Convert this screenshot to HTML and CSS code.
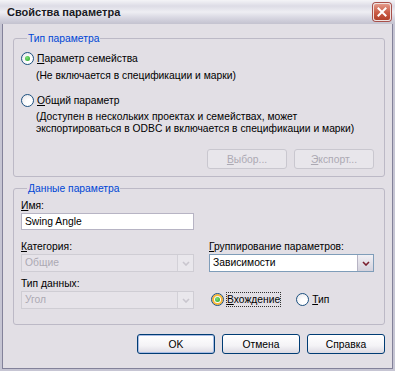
FILE: index.html
```html
<!DOCTYPE html>
<html lang="ru">
<head>
    <meta charset="UTF-8">
    <title>Свойства параметра</title>
    <link rel="stylesheet" href="styles.css">
</head>
<body>

<div class="window">
    <div class="titlebar">
        <span class="title">Свойства параметра</span>
        <span class="close">
            <svg width="18" height="18" viewBox="0 0 18 18">
                <path d="M5 5 L13 13 M13 5 L5 13" stroke="white" stroke-width="2.2" stroke-linecap="square"/>
            </svg>
        </span>
    </div>

    <div class="frame">
        <fieldset class="group group-type">
            <legend>Тип параметра</legend>
            <label class="radio-row first">
                <span class="radio checked"></span>
                <span><u>П</u>араметр семейства</span>
            </label>
            <p class="note">(Не включается в спецификации и марки)</p>
            <label class="radio-row second">
                <span class="radio"></span>
                <span><u>О</u>бщий параметр</span>
            </label>
            <p class="note wide">(Доступен в нескольких проектах и семействах, может<br>экспортироваться в ODBC и включается в спецификации и марки)</p>
            <div class="group-buttons">
                <button class="btn" disabled><u>В</u>ыбор...</button>
                <button class="btn" disabled><u>Э</u>кспорт...</button>
            </div>
        </fieldset>

        <fieldset class="group group-data">
            <legend>Данные параметра</legend>
            <div class="data-grid">
                <div class="cell">
                    <div class="field-label"><u>И</u>мя:</div>
                    <div class="textbox">Swing Angle</div>
                </div>
                <div class="cell"></div>

                <div class="cell">
                    <div class="field-label"><u>К</u>атегория:</div>
                    <div class="combo disabled">
                        <span class="combo-text">Общие</span>
                        <span class="combo-arrow">
                            <svg width="8" height="5" viewBox="0 0 8 5"><path d="M1 1 L4 4 L7 1" stroke="#c9c6ce" stroke-width="1.6" fill="none"/></svg>
                        </span>
                    </div>
                </div>
                <div class="cell">
                    <div class="field-label"><u>Г</u>руппирование параметров:</div>
                    <div class="combo">
                        <span class="combo-text">Зависимости</span>
                        <span class="combo-arrow">
                            <svg width="8" height="5" viewBox="0 0 8 5"><path d="M1 1 L4 4 L7 1" stroke="#7a2030" stroke-width="1.6" fill="none"/></svg>
                        </span>
                    </div>
                </div>

                <div class="cell">
                    <div class="field-label">Тип данных:</div>
                    <div class="combo disabled">
                        <span class="combo-text">Угол</span>
                        <span class="combo-arrow">
                            <svg width="8" height="5" viewBox="0 0 8 5"><path d="M1 1 L4 4 L7 1" stroke="#c9c6ce" stroke-width="1.6" fill="none"/></svg>
                        </span>
                    </div>
                </div>
                <div class="cell radio-pair">
                    <label class="radio-row">
                        <span class="radio checked hover"></span>
                        <span class="focus"><u>В</u>хождение</span>
                    </label>
                    <label class="radio-row">
                        <span class="radio"></span>
                        <span><u>Т</u>ип</span>
                    </label>
                </div>
            </div>
        </fieldset>

        <div class="actions">
            <button class="btn default">OK</button>
            <button class="btn">Отмена</button>
            <button class="btn">Справка</button>
        </div>
    </div>
</div>

</body>
</html>
```

FILE: styles.css
```css
body {
    margin: 0;
    padding: 0;
    font-family: "Liberation Sans", Arial, sans-serif;
    font-size: 10.3px;
    color: black;
    background-color: #e2dfe5;
}
u {
    text-decoration: underline;
    text-underline-offset: 1px;
}
.window {
    width: 395px;
    height: 371px;
    display: flex;
    flex-direction: column;
}
.titlebar {
    height: 24px;
    flex-shrink: 0;
    display: flex;
    align-items: center;
    justify-content: space-between;
    padding: 0 4px 0 7px;
    box-sizing: border-box;
    background: linear-gradient(to bottom, #f4f4f7 0%, #dddce6 25%, #eeeef3 50%, #d7d6e1 75%, #c3c2cf 100%);
}
.title {
    font-weight: bold;
    font-size: 11px;
    color: #1a1a24;
}
.close {
    width: 18px;
    height: 18px;
    border-radius: 3px;
    border: 1px solid #f0e3e0;
    box-sizing: border-box;
    display: flex;
    align-items: center;
    justify-content: center;
    background: linear-gradient(to bottom, #e39a8a, #c95a44 55%, #b2412b);
    box-shadow: 0 0 0 1px #a8504a;
}
.close svg {
    width: 16px;
    height: 16px;
}
.frame {
    flex: 1;
    border: 2px solid #c6c5d3;
    border-top: none;
    box-shadow: inset 1px 0 0 #83829a, inset -1px 0 0 #83829a, inset 0 -1px 0 #83829a;
    padding: 8px 8px 0 11px;
    display: flex;
    flex-direction: column;
}
.group {
    margin: 0;
    border: 1px solid #bcb9c6;
    border-radius: 3px;
    padding: 0 8px 0 7px;
    min-width: 0;
}
.group legend {
    color: #0046d5;
    padding: 0 1px;
    margin-left: 6px;
    line-height: 13px;
}
.radio-row {
    display: flex;
    align-items: center;
    gap: 3px;
    line-height: 13px;
}
.radio-row.first {
    margin-top: 7px;
}
.radio-row.second {
    margin-top: 12px;
}
.radio {
    width: 13px;
    height: 13px;
    box-sizing: border-box;
    border-radius: 50%;
    border: 1px solid #1c5180;
    background: radial-gradient(circle at 65% 70%, #ffffff 30%, #e3e2e6 100%);
    display: flex;
    align-items: center;
    justify-content: center;
    flex-shrink: 0;
}
.radio.checked::after {
    content: "";
    width: 5px;
    height: 5px;
    border-radius: 50%;
    background: radial-gradient(circle at 40% 35%, #7ee07a, #21a121);
}
.radio.hover {
    box-shadow: inset 0 0 0 2px #f8b636;
}
.focus {
    outline: 1px dotted #333;
    outline-offset: 0;
}
.note {
    margin: 4px 0 0 15px;
    line-height: 13px;
    white-space: nowrap;
}
.note.wide {
    line-height: 12px;
}
.group-buttons {
    display: flex;
    justify-content: flex-end;
    gap: 7px;
    margin: 14px 2px 7px 0;
}
.btn {
    font-family: "Liberation Sans", Arial, sans-serif;
    font-size: 10.3px;
    width: 80px;
    height: 20px;
    padding: 0;
    color: black;
    border: 1px solid #003c74;
    border-radius: 3px;
    background: linear-gradient(to bottom, #ffffff 0%, #f4f3f6 60%, #dcdae2 100%);
}
.btn:disabled {
    color: #aca9b3;
    border-color: #c9c7cf;
    background: #e8e6eb;
}
.btn.default {
    box-shadow: inset 0 0 0 1px #a8bce4;
}
.group-data {
    margin-top: 5px;
    padding-bottom: 15px;
}
.data-grid {
    display: grid;
    grid-template-columns: 173px 165px;
    column-gap: 15px;
    margin-top: 4px;
}
.field-label {
    line-height: 13px;
    height: 14px;
}
.cell:nth-child(3), .cell:nth-child(4) {
    margin-top: 10px;
}
.cell:nth-child(5) {
    margin-top: 5px;
}
.textbox {
    height: 17px;
    box-sizing: border-box;
    border: 1px solid #b7b4c4;
    background: white;
    padding: 1px 3px;
    line-height: 13px;
}
.combo {
    height: 18px;
    box-sizing: border-box;
    border: 1px solid #7f9db9;
    background: white;
    display: flex;
    align-items: stretch;
}
.combo-text {
    flex: 1;
    padding: 0 3px;
    line-height: 16px;
}
.combo-arrow {
    width: 15px;
    display: flex;
    align-items: center;
    justify-content: center;
    background: linear-gradient(to bottom, #f1f0f5, #d4d2dd);
    border-left: 1px solid #b7b4c4;
}
.combo.disabled {
    border-color: #cfcdd4;
    background: #e6e3e9;
    color: #aca9b3;
}
.combo.disabled .combo-arrow {
    background: #e9e7ec;
    border-left-color: #d3d1d8;
}
.radio-pair {
    display: flex;
    align-items: flex-end;
    gap: 16px;
    padding: 0 0 3px 2px;
}
.actions {
    display: flex;
    justify-content: flex-end;
    gap: 7px;
    margin: 9px 0 0 0;
}
.actions .btn {
    width: 78px;
}
```
